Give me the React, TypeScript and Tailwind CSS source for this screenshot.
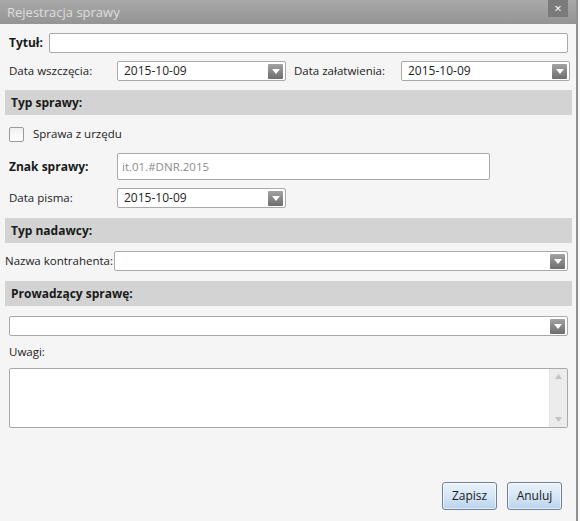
import React from "react";

const font = { fontFamily: '"Segoe UI", "Open Sans", "Noto Sans", sans-serif' };

function Arrow() {
    return (
        <div className="w-[15px] h-[15px] bg-gradient-to-b from-[#a3a3a3] to-[#6e6e6e] flex items-center justify-center rounded-[1px]">
            <svg width="8" height="5" viewBox="0 0 8 5">
                <path d="M0 0 L8 0 L4 5 Z" fill="#ffffff" />
            </svg>
        </div>
    );
}

function Select({ value, className }: { value?: string; className: string }) {
    return (
        <div className={`h-[20px] bg-white border border-[#a9a9a9] rounded-[2px] flex items-center justify-between pl-[6px] pr-[2px] ${className}`}>
            <span className="text-[12px] text-[#222]">{value}</span>
            <Arrow />
        </div>
    );
}

function Section({ title }: { title: string }) {
    return (
        <div className="h-[25px] bg-[#d3d3d3] mx-[5px] mr-[4px] flex items-center pl-[6px]">
            <span className="text-[12px] font-bold text-[#1a1a1a]">{title}</span>
        </div>
    );
}

function Button({ label }: { label: string }) {
    return (
        <button className="w-[55px] h-[28px] rounded-[3px] border border-[#70829a] bg-gradient-to-b from-[#eaf2fb] via-[#d6e6f6] to-[#b9d3ee] shadow-[inset_0_0_0_1px_rgba(255,255,255,0.6)] text-[12px] text-[#1a1a1a]">
            {label}
        </button>
    );
}

export default function App() {
    return (
        <div className="w-[580px] h-[521px] bg-[#f8f8f8] flex" style={font}>
            <div className="w-[578px] h-full bg-[#f5f5f5] border-r-2 border-[#8f8f8f] flex flex-col">
                {/* pasek tytułu */}
                <div className="h-[24px] bg-gradient-to-b from-[#a9a9a9] to-[#949494] flex items-start justify-between shrink-0">
                    <span className="text-[13px] text-[#dedede] pl-[7px] pt-[3px] leading-[18px]">Rejestracja sprawy</span>
                    <div className="w-[20px] h-[17px] bg-[#7a7a7a] mr-[8px] flex items-center justify-center text-white text-[13px] leading-none">
                        ×
                    </div>
                </div>

                <div className="flex flex-col text-[11.5px] text-[#222] whitespace-nowrap">
                    {/* Tytuł */}
                    <div className="flex items-center mt-[9px] h-[20px]">
                        <span className="font-bold text-[#1a1a1a] text-[12px] pl-[9px] w-[49px]">Tytuł:</span>
                        <div className="flex-1 h-[20px] bg-white border border-[#a9a9a9] rounded-[2px] mr-[8px]" />
                    </div>

                    {/* daty */}
                    <div className="flex items-center mt-[8px] h-[20px]">
                        <span className="pl-[9px] w-[117px]">Data wszczęcia:</span>
                        <Select value="2015-10-09" className="w-[169px]" />
                        <span className="pl-[8px] w-[115px]">Data załatwienia:</span>
                        <Select value="2015-10-09" className="w-[169px]" />
                    </div>

                    <div className="mt-[9px]">
                        <Section title="Typ sprawy:" />
                    </div>

                    {/* checkbox */}
                    <div className="flex items-center mt-[11px] h-[16px] pl-[9px]">
                        <div className="w-[15px] h-[15px] bg-white border border-[#9a9a9a] rounded-[2px] bg-gradient-to-b from-[#f0f0f0] to-[#ffffff]" />
                        <span className="pl-[9px]">Sprawa z urzędu</span>
                    </div>

                    {/* Znak sprawy */}
                    <div className="flex items-center mt-[11px] h-[27px]">
                        <span className="font-bold text-[#1a1a1a] text-[12px] pl-[9px] w-[117px]">Znak sprawy:</span>
                        <div className="w-[373px] h-[27px] bg-white border border-[#a9a9a9] rounded-[2px] flex items-center pl-[4px]">
                            <span className="text-[#8c8c8c]">it.01.#DNR.2015</span>
                        </div>
                    </div>

                    {/* Data pisma */}
                    <div className="flex items-center mt-[8px] h-[20px]">
                        <span className="pl-[9px] w-[117px]">Data pisma:</span>
                        <Select value="2015-10-09" className="w-[169px]" />
                    </div>

                    <div className="mt-[10px]">
                        <Section title="Typ nadawcy:" />
                    </div>

                    {/* kontrahent */}
                    <div className="flex items-center mt-[8px] h-[20px]">
                        <span className="pl-[5px] w-[114px] shrink-0">Nazwa kontrahenta:</span>
                        <Select className="flex-1 mr-[8px]" />
                    </div>

                    <div className="mt-[10px]">
                        <Section title="Prowadzący sprawę:" />
                    </div>

                    <div className="flex mt-[10px] pl-[9px] pr-[8px]">
                        <Select className="flex-1" />
                    </div>

                    <div className="pl-[9px] mt-[8px] h-[16px] leading-[16px]">Uwagi:</div>

                    {/* uwagi */}
                    <div className="flex mt-[8px] pl-[9px] pr-[8px]">
                        <div className="flex-1 h-[60px] bg-white border border-[#a9a9a9] rounded-[2px] flex justify-end">
                            <div className="w-[18px] h-full bg-[#ececec] border-l border-[#e2e2e2] flex flex-col items-center justify-between py-[5px]">
                                <svg width="7" height="5" viewBox="0 0 7 5">
                                    <path d="M0 5 L7 5 L3.5 0 Z" fill="#c2c2c2" />
                                </svg>
                                <svg width="7" height="5" viewBox="0 0 7 5">
                                    <path d="M0 0 L7 0 L3.5 5 Z" fill="#c2c2c2" />
                                </svg>
                            </div>
                        </div>
                    </div>

                    {/* przyciski */}
                    <div className="flex justify-end gap-[10px] mt-[54px] pr-[14px]">
                        <Button label="Zapisz" />
                        <Button label="Anuluj" />
                    </div>
                </div>
            </div>
        </div>
    );
}
